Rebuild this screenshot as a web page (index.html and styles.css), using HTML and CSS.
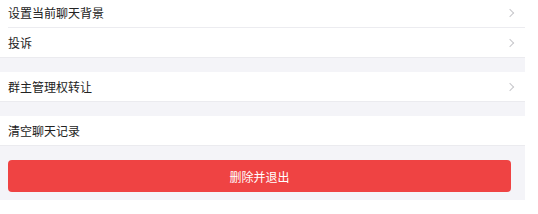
FILE: index.html
```html
<!DOCTYPE html>
<html lang="zh-CN">
<head>
    <meta charset="UTF-8">
    <meta name="viewport" content="width=device-width, initial-scale=1.0">
    <title>聊天设置</title>
    <link rel="stylesheet" href="styles.css">
</head>
<body>
    <div class="page">
        <!-- Chat options -->
        <div class="group first">
            <div class="cell">
                <span class="label">设置当前聊天背景</span>
                <span class="arrow"></span>
            </div>
            <div class="cell">
                <span class="label">投诉</span>
                <span class="arrow"></span>
            </div>
        </div>

        <!-- Owner -->
        <div class="group">
            <div class="cell">
                <span class="label">群主管理权转让</span>
                <span class="arrow"></span>
            </div>
        </div>

        <!-- History -->
        <div class="group">
            <div class="cell">
                <span class="label">清空聊天记录</span>
            </div>
        </div>

        <div class="actions">
            <button class="btn-danger">删除并退出</button>
        </div>
    </div>
</body>
</html>
```

FILE: styles.css
```css
/* Base */
html, body {
    margin: 0;
    padding: 0;
    background: #fff;
    font-family: "Noto Sans CJK SC", "Noto Sans", sans-serif;
}

.page {
    width: 525px;
    background: #f4f4f8;
}

/* Groups */
.group {
    background: #fff;
    border-bottom: 1px solid #ebebef;
    margin-bottom: 14px;
}

.group.first {
    margin-top: -2px;
}

.cell {
    height: 29px;
    display: flex;
    align-items: center;
    justify-content: space-between;
    padding: 0 8px;
}

/* inset divider between rows */
.cell + .cell {
    margin-left: 8px;
    padding-left: 0;
    border-top: 1px solid #ececf0;
}

.label {
    font-size: 12px;
    color: #222;
}

.arrow {
    width: 5px;
    height: 5px;
    border-top: 1px solid #c8c8cc;
    border-right: 1px solid #c8c8cc;
    transform: rotate(45deg);
    margin-right: 4px;
}

/* Bottom action */
.actions {
    padding: 14px 14px 8px 8px;
    margin-top: -14px;
}

.btn-danger {
    display: block;
    width: 100%;
    height: 32px;
    border: none;
    border-radius: 4px;
    background: #ef4343;
    color: #fff;
    font-family: inherit;
    font-size: 12px;
}
```
